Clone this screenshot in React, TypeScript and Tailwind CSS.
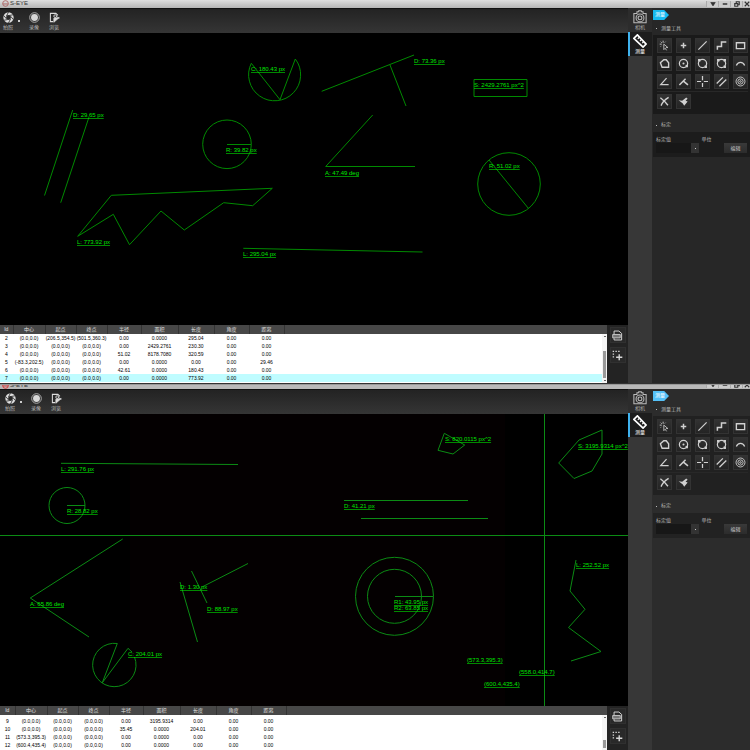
import React from 'react';
import clsx from 'clsx';

type Label = { x: number; y: number; text: string };

type Row = string[];

const columns = ['Id', '中心', '起点', '终点', '半径', '面积', '长度', '角度', '距离'];

const Z = '(0.0,0.0)';

const topRows: Row[] = [
  ['2', Z, '(206.5,354.5)', '(501.5,360.3)', '0.00', '0.0000', '295.04', '0.00', '0.00'],
  ['3', Z, Z, Z, '0.00', '2429.2761', '230.30', '0.00', '0.00'],
  ['4', Z, Z, Z, '51.02', '8178.7080', '320.59', '0.00', '0.00'],
  ['5', '(-83.3,202.5)', Z, Z, '0.00', '0.0000', '0.00', '0.00', '29.46'],
  ['6', Z, Z, Z, '42.61', '0.0000', '180.43', '0.00', '0.00'],
  ['7', Z, Z, Z, '0.00', '0.0000', '773.92', '0.00', '0.00'],
];

const bottomRows: Row[] = [
  ['9', Z, Z, Z, '0.00', '3195.9314', '0.00', '0.00', '0.00'],
  ['10', Z, Z, Z, '35.45', '0.0000', '204.01', '0.00', '0.00'],
  ['11', '(573.3,395.3)', Z, Z, '0.00', '0.0000', '0.00', '0.00', '0.00'],
  ['12', '(600.4,435.4)', Z, Z, '0.00', '0.0000', '0.00', '0.00', '0.00'],
];

const topLabels: Label[] = [
  { x: 251, y: 38, text: 'C: 180.43 px' },
  { x: 414, y: 30, text: 'D: 73.36 px' },
  { x: 474, y: 54, text: 'S: 2429.2761 px^2' },
  { x: 73, y: 84, text: 'D: 29.65 px' },
  { x: 226, y: 119, text: 'R: 39.82 px' },
  { x: 325, y: 142, text: 'A: 47.49 deg' },
  { x: 489, y: 135, text: 'R: 51.02 px' },
  { x: 77, y: 211, text: 'L: 773.92 px' },
  { x: 243, y: 223, text: 'L: 295.04 px' },
];

const bottomLabels: Label[] = [
  { x: 445, y: 27, text: 'S: 820.0115 px^2' },
  { x: 578, y: 34, text: 'S: 3195.9314 px^2' },
  { x: 61, y: 57, text: 'L: 291.76 px' },
  { x: 67, y: 99, text: 'R: 28.82 px' },
  { x: 344, y: 94, text: 'D: 41.21 px' },
  { x: 30, y: 192, text: 'A: 65.86 deg' },
  { x: 180, y: 175, text: 'D: 1.30 px' },
  { x: 207, y: 197, text: 'D: 88.97 px' },
  { x: 394, y: 190, text: 'R1: 43.95 px' },
  { x: 394, y: 196, text: 'R2: 63.85 px' },
  { x: 576, y: 153, text: 'L: 252.52 px' },
  { x: 128, y: 242, text: 'C: 204.01 px' },
  { x: 467, y: 248, text: '(573.3,395.3)' },
  { x: 519, y: 260, text: '(558.0,414.7)' },
  { x: 484, y: 272, text: '(600.4,435.4)' },
];

const TopShapes = () => (
  <>
    <path d="M295.3 26 280 66.7 251.3 30.3A26 26 0 1 0 295.3 26" />
    <path d="M321.7 58.3 414 22M390 32l16 41" />
    <path d="M474 46.5h53v17h-53z" />
    <path d="M72.7 77 44.5 162.5M89 84 60.7 169.7" />
    <circle cx="227" cy="111.3" r="24.3" />
    <path d="M227 111.5h24" />
    <path d="M372.7 82 325.7 133.5H415" />
    <circle cx="509" cy="151" r="31.3" />
    <path d="M489 127l39.5 48.5" />
    <path d="M77.7 203.3 111.3 162.3 272.3 155.3 252.7 172.7 223.7 169.7 184.3 197 161 178 129.5 211.7 113.3 181.3z" />
    <path d="M243.3 215.3 422.5 219" />
  </>
);

const BottomShapes = () => (
  <>
    <path d="M0 121.5H628" />
    <path d="M544.5 0V292" />
    <path d="M444.3 19.3 464.7 31 453 40 438 36.3z" />
    <path d="M602 16v24l-10 17-18 7.5-15.3-15.5L579 26z" />
    <path d="M61 49.3 238 50.5M344 86.5h124M361 104.5h127" />
    <circle cx="67" cy="91.5" r="18" />
    <path d="M67 91.5h18" />
    <path d="M122.7 125 30.3 184 89 223" />
    <path d="M191.5 157 207 189M202 173l46-23.5M180 168l17.5 60" />
    <path d="M134.5 243A21.7 21.7 0 1 1 117.3 229.5L102.3 268.7 128 234.3 132 238" />
    <circle cx="394.5" cy="182.3" r="39" />
    <circle cx="394.5" cy="182.3" r="27" />
    <path d="M395 182.5h38" />
    <path d="M576 146 570 177 585 195.3 568.5 213.5 601 237.5 571 247" />
  </>
);

interface CanvasProps {
  labels: Label[];
  noisy?: boolean;
  children: React.ReactNode;
}

const Canvas: React.FC<CanvasProps> = ({ labels, noisy, children }) => (
  <svg viewBox="0 0 628 292" className="block w-full bg-black">
    {noisy && <path d="M130 0h375v292H130z" fill="#040001" />}
    <g fill="none" stroke={noisy ? '#0b8b14' : '#008a00'} strokeWidth="1">
      {children}
    </g>
    <g className="fill-[#00e400] font-['Liberation_Sans',sans-serif] text-[6px]">
      {labels.map((label) => (
        <text key={label.text} x={label.x} y={label.y} className="underline">
          {label.text}
        </text>
      ))}
    </g>
  </svg>
);

const Icon: React.FC<{ className?: string; children: React.ReactNode }> = ({ className, children }) => (
  <svg
    viewBox="0 0 16 16"
    className={className ?? 'size-[11px]'}
    fill="none"
    stroke="currentColor"
    strokeWidth="1.8"
    aria-hidden="true"
  >
    {children}
  </svg>
);

const tools = [
  {
    name: '选择',
    icon: (
      <>
        <path d="M6 1v3M1 6h3M2.5 2.5l1.5 1.5M9.5 2.5 8.5 3.5M2.5 9.5 3.5 8.5" strokeWidth="1.3" />
        <path d="M7 6v8l2-2 2 3M7 6l6 5h-3" strokeWidth="1.2" />
      </>
    ),
  },
  { name: '点', icon: <path d="M8 4v8M4 8h8" strokeWidth="2.2" /> },
  { name: '直线', icon: <path d="M2 14 14 2" /> },
  { name: '折线', icon: <path d="M2 14V9.5h6V3h7" strokeWidth="2.2" /> },
  { name: '矩形', icon: <path d="M2 4h12v8.5H2z" strokeWidth="2" /> },
  { name: '多边形', icon: <path d="M7 2.5h3.500l3.500 4.500v6.500H4.500L2 7z" strokeWidth="2" /> },
  {
    name: '圆心圆',
    icon: (
      <>
        <circle cx="8" cy="8" r="6" />
        <circle cx="8" cy="8" r="1.5" fill="currentColor" stroke="none" />
        <path d="M11 10h3.5v3.5H11z" fill="currentColor" stroke="none" />
      </>
    ),
  },
  {
    name: '两点圆',
    icon: (
      <>
        <circle cx="8" cy="8" r="6" />
        <path d="M1.5 1.500H5V5H1.500zM11 11h3.500v3.500H11z" fill="currentColor" stroke="none" />
      </>
    ),
  },
  {
    name: '三点圆',
    icon: (
      <>
        <circle cx="8" cy="8" r="6" />
        <path d="M1.5 1.500H5V5H1.500zM11 1.500h3.500V5H11zM11 11h3.500v3.500H11z" fill="currentColor" stroke="none" />
      </>
    ),
  },
  { name: '圆弧', icon: <path d="M2 11c2-6 10-6 12 0" /> },
  { name: '角度', icon: <path d="M11 3 2.5 12.5H14" /> },
  { name: '垂线', icon: <path d="M2 13 11 4M7.5 7l7 6" strokeWidth="2.2" /> },
  { name: '十字线', icon: <path d="M8 0v6M8 10v6M0 8h6M10 8h6" /> },
  { name: '平行线', icon: <path d="M1 11 10 2M5 15 15 5" /> },
  {
    name: '同心圆',
    icon: (
      <g strokeWidth="1.3">
        <circle cx="8" cy="8" r="6.5" />
        <circle cx="8" cy="8" r="3.8" />
        <circle cx="8" cy="8" r="1.2" />
      </g>
    ),
  },
];

const editTools = [
  { name: '删除', icon: <path d="M2 2.5c4 3 8 7 11 11M14 2C9 5 5 9 3 14" strokeWidth="2" /> },
  {
    name: '清空',
    icon: <path d="M1 6l5 1 6-5 2 2-3 3 3 1-5 6-2-3z" fill="currentColor" stroke="none" />,
  },
];

const ToolButton: React.FC<{ name: string; children: React.ReactNode }> = ({ name, children }) => (
  <button
    type="button"
    aria-label={name}
    className="flex h-[15px] items-center justify-center border border-[#333] bg-linear-to-b from-[#323232] to-[#242424] text-[#d0d0d0]"
  >
    <Icon>{children}</Icon>
  </button>
);

const windowButton = 'flex w-3 justify-center border-l border-[#aaa] bg-[#ccc]';

const TitleBar: React.FC<{ clipped?: boolean }> = ({ clipped }) => (
  <header
    className={clsx(
      'flex shrink-0 items-end justify-between overflow-hidden',
      clipped ? 'h-1 bg-[#b9b9b9]' : 'h-2 bg-linear-to-b from-[#dedede] to-[#b5b5b5]',
    )}
  >
    <div className={clsx('flex h-2 items-center gap-px pl-0.5 text-[6px] leading-[8px] text-[#333]', !clipped && 'pb-0.5')}>
      <Icon className={clsx('size-[7px]', clipped ? 'text-[#d22]' : 'text-[#a55]')}>
        <circle cx="8" cy="8" r="6.5" />
        <path d="M2 9h12" />
      </Icon>
      S-EYE
    </div>
    <div className="flex h-2 items-center text-[#333]">
      <button type="button" aria-label="菜单" className={windowButton}>
        <Icon className="size-1.5"><path d="M2 4h12L8 13z" fill="currentColor" /></Icon>
      </button>
      <button type="button" aria-label="最小化" className={windowButton}>
        <Icon className="size-1.5"><path d="M2 8h12" strokeWidth="4" /></Icon>
      </button>
      <button type="button" aria-label="还原" className={windowButton}>
        <Icon className="size-1.5"><path d="M2 7h8v7H2zM6 6V2h8v8h-3" strokeWidth="3" /></Icon>
      </button>
      <button type="button" aria-label="关闭" className="flex w-2 justify-center border-l border-[#aaa] bg-[#ccc]">
        <Icon className="size-1.5"><path d="M2 2l12 12M14 2 2 14" strokeWidth="3" /></Icon>
      </button>
    </div>
  </header>
);

const Toolbar: React.FC<{ shifted?: boolean }> = ({ shifted }) => (
  <div
    className={clsx(
      'flex h-[25px] items-start border-t border-[#111] bg-linear-to-b from-[#232323] to-[#353535] pt-[3px] text-[#bbb]',
      shifted ? 'pl-1' : 'pl-0.5',
    )}
  >
    <button type="button" className="flex w-3 flex-col items-center text-[5px] leading-[8px]">
      <Icon className="size-[11px] text-[#e0e0e0]">
        <circle cx="8" cy="8" r="5.5" strokeWidth="4" />
        <path d="M8 0 5 6M15 4l-6 1M15 11l-4-5M8 16l3-6M1 12l6-1M1 5l4 5" stroke="#2a2a2a" strokeWidth="1.2" />
      </Icon>
      拍照
    </button>
    <span className="mt-2 ml-1 size-0.5 bg-[#ccc]" />
    <button type="button" className="ml-2 flex w-3 flex-col items-center text-[5px] leading-[8px]">
      <Icon className="size-[11px]">
        <circle cx="8" cy="8" r="7" strokeWidth="1.3" />
        <circle cx="8" cy="8" r="5" fill="#d8d8d8" stroke="none" />
      </Icon>
      录像
    </button>
    <button type="button" className="ml-2 flex w-3 flex-col items-center text-[5px] leading-[8px]">
      <Icon className="size-[11px] text-[#ddd]">
        <path d="M6 14H2V2h8l3 3" strokeWidth="1.5" />
        <circle cx="9" cy="6" r="2" strokeWidth="1.3" />
        <path d="M7 15V9l8-1zM11 6l4 4" fill="currentColor" strokeWidth="1" />
      </Icon>
      浏览
    </button>
  </div>
);

interface ResultsProps {
  rows: Row[];
  selected?: string;
  shifted?: boolean;
}

const Results: React.FC<ResultsProps> = ({ rows, selected, shifted }) => (
  <div className="flex flex-1">
    <div className="relative min-w-0 flex-1 bg-white pb-px">
      <table className="w-full table-fixed border-collapse text-center">
        <colgroup>
          <col className={shifted ? 'w-[15px]' : 'w-[13px]'} />
          <col className="w-8" />
          <col className="w-[31px]" />
          <col className="w-[31px]" />
          <col className="w-[34px]" />
          <col className="w-[37px]" />
          <col className="w-9" />
          <col className="w-[35px]" />
          <col className="w-[35px]" />
          <col />
        </colgroup>
        <thead>
          <tr className="h-[9px] bg-[#474747] text-[5px] leading-[9px] text-[#e0e0e0]">
            {columns.map((column) => (
              <th key={column} className="border-r border-[#333] p-0 font-normal">{column}</th>
            ))}
            <td className="p-0" />
          </tr>
        </thead>
        <tbody className="text-[5px] leading-[8px] text-black">
          {shifted && <tr className="h-0.5"><td colSpan={10} className="p-0" /></tr>}
          {rows.map((row) => (
            <tr key={row[0]} className={clsx('h-2', row[0] === selected && 'bg-[#bffcff]')}>
              {row.map((cell, i) => (
                <td key={i} className="p-0 whitespace-nowrap">{cell}</td>
              ))}
              <td className="p-0" />
            </tr>
          ))}
        </tbody>
      </table>
      {/* Scrollbar */}
      <div className="absolute top-[9px] right-0 bottom-0 flex w-[5px] flex-col items-center justify-between bg-[#f4f4f4] py-0.5">
        <span className="h-px w-0.5 bg-[#666]" />
        <span className={clsx('w-[3px] bg-[#999]', shifted ? 'mt-auto h-2' : 'mt-3 h-[27px]')} />
        {!shifted && <span className="h-px w-0.5 bg-[#666]" />}
      </div>
    </div>
    <div className="flex w-[21px] flex-col items-center gap-1 bg-[#232323] pt-0.5 text-[#d8d8d8]">
      <button type="button" aria-label="导出" className="flex size-4 items-center justify-center border border-[#303030] bg-[#292929]">
        <Icon className="size-[11px]">
          <path d="M3 6V1.5h7L14 5v9.5H3V12" strokeWidth="1.4" />
          <path d="M1 6.5h11v5H1z" fill="#777" strokeWidth="1.2" />
        </Icon>
      </button>
      <button type="button" aria-label="添加" className="flex size-4 items-center justify-center border border-[#303030] bg-[#292929]">
        <Icon className="size-[11px]">
          <path d="M1 2h2M5 2h2M9 2h2M1 6h2M1 10h2" />
          <path d="M10.5 6v9M6 10.5h9" strokeWidth="2" />
        </Icon>
      </button>
    </div>
  </div>
);

const Sidebar = () => (
  <nav className="flex w-6 shrink-0 flex-col bg-[#373737] text-[5px] leading-[7px] text-[#aaa]">
    <button type="button" className="flex h-6 flex-col items-center bg-[#2c2c2c] pt-0.5">
      <Icon className="size-[14px] text-[#bbb]">
        <path d="M1 4h3.500V2h2V.8h3V2h2v2H15v10.5H1z" strokeWidth="1.2" />
        <circle cx="8" cy="9" r="4.5" strokeWidth="1.2" />
        <circle cx="8" cy="9" r="2.2" strokeWidth="1.3" />
      </Icon>
      相机
    </button>
    <button type="button" className="flex h-6 flex-col items-center border-l-2 border-[#3fb2ee] bg-[#1d1d1d] pt-0.5 pr-0.5 text-white">
      <Icon className="size-[14px]">
        <path d="M5 1 15 11.5 11.5 15 1 5z" strokeWidth="1.9" />
        <path d="M7 4 5.5 5.5M9.5 6.5 8 8M12 9l-1.5 1.5" strokeWidth="1.3" />
      </Icon>
      测量
    </button>
  </nav>
);

const ToolPanel: React.FC<{ id: string; light?: boolean }> = ({ id, light }) => (
  <aside className={clsx('w-[98px] shrink-0 pt-0.5 pl-px text-[5px] text-[#bbb]', light ? 'bg-[#2c2c2c]' : 'bg-[#272727]')}>
    <h2
      className={clsx(
        'flex h-2.5 w-4 items-center pl-0.5 text-[5px] text-white [clip-path:polygon(0_0,70%_0,100%_50%,70%_100%,0_100%)]',
        light ? 'bg-[#55c1f8]' : 'bg-[#16baf0]',
      )}
    >
      测量
    </h2>
    <h3 className="flex h-[15px] items-center gap-1 pt-0.5 pl-[3px]">
      <span className="size-px bg-[#bbb]" />
      测量工具
    </h3>
    <div className={clsx('pt-[3px] pr-0.5 pb-[5px] pl-1', light ? 'bg-[#212121]' : 'bg-[#1a1a1a]')}>
      <div className="grid grid-cols-5 gap-x-1 gap-y-[3px]">
        {tools.map((tool) => (
          <ToolButton key={tool.name} name={tool.name}>{tool.icon}</ToolButton>
        ))}
      </div>
      <div className="mt-0.5 grid grid-cols-5 gap-x-1 border-t border-[#282828] pt-0.5">
        {editTools.map((tool) => (
          <ToolButton key={tool.name} name={tool.name}>{tool.icon}</ToolButton>
        ))}
      </div>
    </div>
    <h3 className="flex h-[18px] items-center gap-1 pt-1 pl-[3px]">
      <span className="size-px bg-[#bbb]" />
      标定
    </h3>
    <div className={clsx('grid grid-cols-2 px-[3px] pt-[3px] pb-1 leading-[8px]', light ? 'bg-[#222]' : 'bg-[#1c1c1c]')}>
      <label htmlFor={id}>标定值</label>
      <span>单位</span>
      <div className="relative h-2.5 w-[43px]">
        <select id={id} className="block h-full w-full appearance-none bg-[#171717]" />
        <span className="pointer-events-none absolute inset-y-0 right-0 flex w-2 items-center justify-center bg-[#333]">
          <span className="size-px bg-[#ccc]" />
        </span>
      </div>
      <button type="button" className="h-2.5 w-[23px] justify-self-end bg-linear-to-b from-[#393939] to-[#2c2c2c] text-[#ccc]">
        编辑
      </button>
    </div>
  </aside>
);

const App: React.FC = () => (
  <div className="flex min-h-screen flex-col bg-[#232323] font-['Liberation_Sans','Noto_Sans_CJK_SC',sans-serif]">
    <section className="flex flex-col border-b border-[#333]">
      <TitleBar />
      <div className="flex">
        <main className="flex min-w-0 flex-1 flex-col">
          <Toolbar />
          <Canvas labels={topLabels}>
            <TopShapes />
          </Canvas>
          <Results rows={topRows} selected="7" />
        </main>
        <Sidebar />
        <ToolPanel id="calibration-top" />
      </div>
    </section>

    <section className="flex flex-1 flex-col border-t border-[#999]">
      <TitleBar clipped />
      <div className="flex flex-1">
        <main className="flex min-w-0 flex-1 flex-col">
          <Toolbar shifted />
          <Canvas labels={bottomLabels} noisy>
            <BottomShapes />
          </Canvas>
          <Results rows={bottomRows} shifted />
        </main>
        <Sidebar />
        <ToolPanel id="calibration-bottom" light />
      </div>
    </section>
  </div>
);

export default App;
